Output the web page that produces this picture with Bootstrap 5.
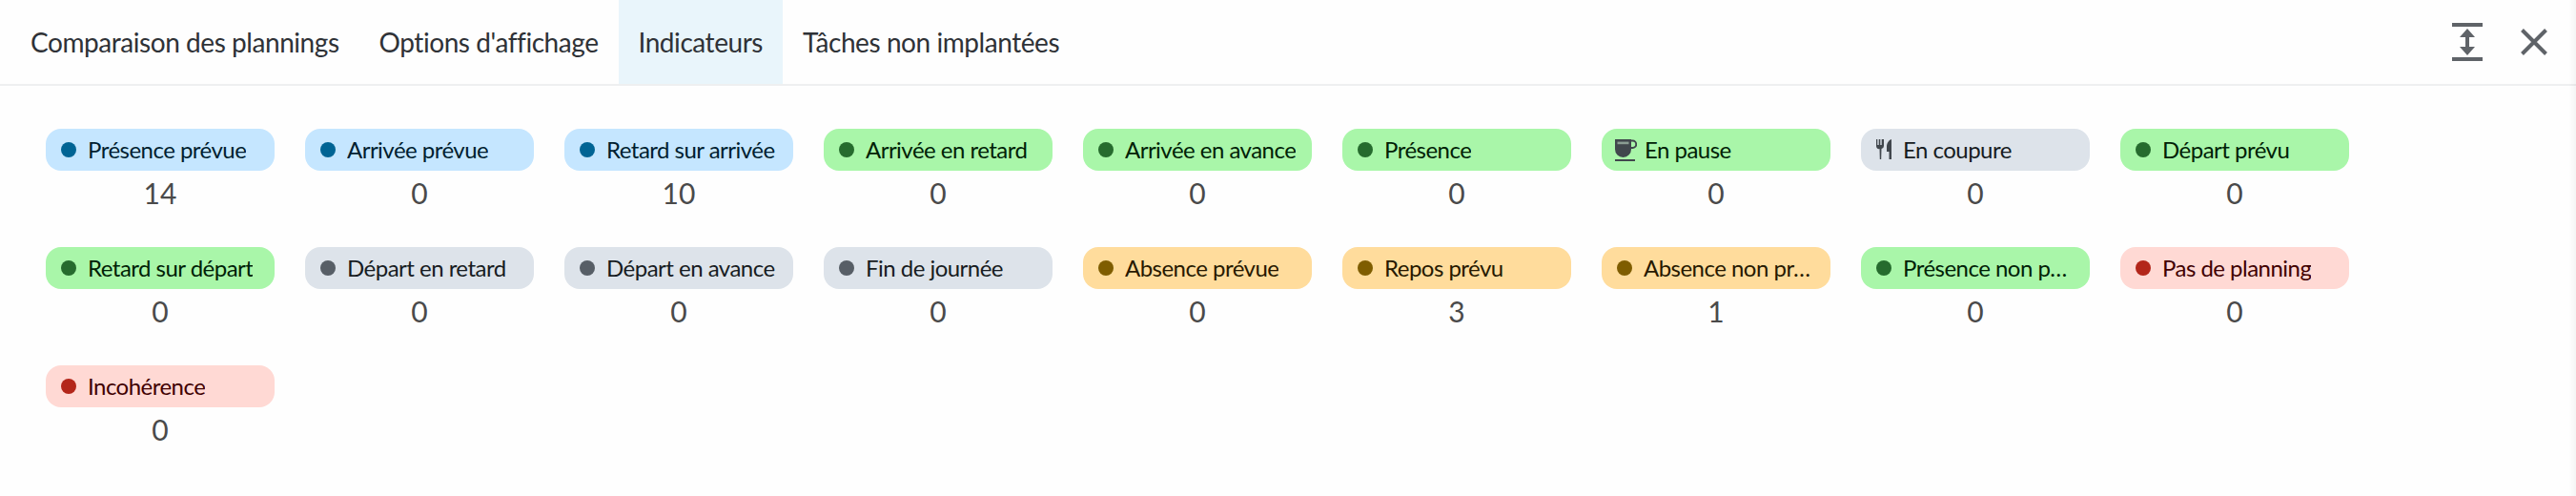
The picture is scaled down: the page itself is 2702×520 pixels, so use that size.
<!DOCTYPE html>
<html lang="fr"><head><meta charset="utf-8"><title>Indicateurs</title>
<link href="https://cdn.jsdelivr.net/npm/bootstrap@5.3.0/dist/css/bootstrap.min.css" rel="stylesheet">
<style>
html,body{background:#fefefe;font-family:Lato,"Open Sans",sans-serif;overflow:hidden;}
body::after{content:"";position:fixed;top:0;right:0;bottom:0;width:7px;background:linear-gradient(to right,rgba(0,0,0,0),rgba(0,0,0,.04));pointer-events:none;}
.top-bar{height:90px;border-bottom:2px solid #eeeff0;padding-left:11px;padding-right:30px;}
.tab-item{height:88px;padding:0 21px;font-size:28px;letter-spacing:-.44px;color:#2f3237;text-decoration:none;display:flex;align-items:center;white-space:nowrap;}
.tab-item.is-on{background:#e9f5fb;}
.tool-box{gap:40px;}
.tool-ico{display:block;background:none;border:0;padding:0;line-height:0;}
.indic-wrap{padding:45px 48px 0;column-gap:32px;row-gap:34px;}
.indic{width:240px;}
.pill{height:44px;border-radius:16px;padding:0 16px;font-size:24px;letter-spacing:-.52px;gap:12px;}
.pill .lbl{min-width:0;}
.dot{width:16px;height:16px;border-radius:50%;flex:none;}
.val{height:46px;line-height:46px;font-size:30px;color:#4a4a4a;text-align:center;}
.c-blue{background:#c5e6ff;color:#001e30;}.c-blue .dot{background:#006494;}
.c-green{background:#a9f6a9;color:#002106;}.c-green .dot{background:#266b2e;}
.c-grey{background:#dde3ea;color:#171c22;}.c-grey .dot{background:#575e66;}
.c-orange{background:#ffdc9c;color:#271900;}.c-orange .dot{background:#7f5d00;}
.c-red{background:#ffd9d4;color:#410001;}.c-red .dot{background:#b3261a;}
.ico-fill{flex:none;fill:#41474d;}
.pill-pause{padding-left:13px;gap:8px;}
</style></head><body>
<nav class="top-bar d-flex align-items-center justify-content-between">
 <div class="d-flex">
  <a class="tab-item" href="#">Comparaison des plannings</a>
  <a class="tab-item" href="#">Options d'affichage</a>
  <a class="tab-item is-on" href="#">Indicateurs</a>
  <a class="tab-item" href="#">Tâches non implantées</a>
 </div>
 <div class="d-flex align-items-center tool-box">
  <button class="tool-ico" aria-label="Agrandir"><svg width="32" height="40" viewBox="0 0 32 40"><path fill="#5f6368" d="M0 0h32v4H0zM0 36h32v4H0zM16 6l8 9h-6v10h6l-8 9-8-9h6V15H8z"/></svg></button>
  <button class="tool-ico" aria-label="Fermer"><svg width="28" height="28" viewBox="0 0 28 28"><path fill="none" stroke="#5f6368" stroke-width="4" d="M1.500 1.500l25 25M26.500 1.500l-25 25"/></svg></button>
 </div>
</nav>
<div class="indic-wrap d-flex flex-wrap" id="w">
<div class="indic"><div class="pill c-blue d-flex align-items-center"><span class="dot"></span><span class="lbl text-truncate">Présence prévue</span></div><div class="val">14</div></div>
<div class="indic"><div class="pill c-blue d-flex align-items-center"><span class="dot"></span><span class="lbl text-truncate">Arrivée prévue</span></div><div class="val">0</div></div>
<div class="indic"><div class="pill c-blue d-flex align-items-center"><span class="dot"></span><span class="lbl text-truncate">Retard sur arrivée</span></div><div class="val">10</div></div>
<div class="indic"><div class="pill c-green d-flex align-items-center"><span class="dot"></span><span class="lbl text-truncate">Arrivée en retard</span></div><div class="val">0</div></div>
<div class="indic"><div class="pill c-green d-flex align-items-center"><span class="dot"></span><span class="lbl text-truncate">Arrivée en avance</span></div><div class="val">0</div></div>
<div class="indic"><div class="pill c-green d-flex align-items-center"><span class="dot"></span><span class="lbl text-truncate">Présence</span></div><div class="val">0</div></div>
<div class="indic"><div class="pill c-green pill-pause d-flex align-items-center"><svg class="ico-fill" width="24" height="24" viewBox="0 0 24 24"><path d="M1 1h17v.6h1.500a4.700 4.700 0 0 1 0 9.400H18a8.500 8.500 0 0 1-8.500 9A8.500 8.500 0 0 1 1 11.500zM18 3.500V9h1.500a2.750 2.750 0 0 0 0-5.500zM1 22h21v2H1z"/><rect x="3.500" y="3.600" width="12" height="2.600" fill="#8a9c92"/></svg><span class="lbl text-truncate">En pause</span></div><div class="val">0</div></div>
<div class="indic"><div class="pill c-grey d-flex align-items-center"><svg class="ico-fill" width="16" height="22" viewBox="0 0 16 22"><path d="M0 0h1.300v6h1.400V0h1.600v6h1.400V0H8v7a3.200 3.200 0 0 1-2.500 3.100L5.200 21H3.800L3.500 10.100A3.200 3.200 0 0 1 0 7zM11 8c0-4 2-7 5-8v21h-2.500v-8H11z"/></svg><span class="lbl text-truncate">En coupure</span></div><div class="val">0</div></div>
<div class="indic"><div class="pill c-green d-flex align-items-center"><span class="dot"></span><span class="lbl text-truncate">Départ prévu</span></div><div class="val">0</div></div>
<div class="indic"><div class="pill c-green d-flex align-items-center"><span class="dot"></span><span class="lbl text-truncate">Retard sur départ</span></div><div class="val">0</div></div>
<div class="indic"><div class="pill c-grey d-flex align-items-center"><span class="dot"></span><span class="lbl text-truncate">Départ en retard</span></div><div class="val">0</div></div>
<div class="indic"><div class="pill c-grey d-flex align-items-center"><span class="dot"></span><span class="lbl text-truncate">Départ en avance</span></div><div class="val">0</div></div>
<div class="indic"><div class="pill c-grey d-flex align-items-center"><span class="dot"></span><span class="lbl text-truncate">Fin de journée</span></div><div class="val">0</div></div>
<div class="indic"><div class="pill c-orange d-flex align-items-center"><span class="dot"></span><span class="lbl text-truncate">Absence prévue</span></div><div class="val">0</div></div>
<div class="indic"><div class="pill c-orange d-flex align-items-center"><span class="dot"></span><span class="lbl text-truncate">Repos prévu</span></div><div class="val">3</div></div>
<div class="indic"><div class="pill c-orange d-flex align-items-center"><span class="dot"></span><span class="lbl text-truncate">Absence non prévue</span></div><div class="val">1</div></div>
<div class="indic"><div class="pill c-green d-flex align-items-center"><span class="dot"></span><span class="lbl text-truncate">Présence non prévue</span></div><div class="val">0</div></div>
<div class="indic"><div class="pill c-red d-flex align-items-center"><span class="dot"></span><span class="lbl text-truncate">Pas de planning</span></div><div class="val">0</div></div>
<div class="indic"><div class="pill c-red d-flex align-items-center"><span class="dot"></span><span class="lbl text-truncate">Incohérence</span></div><div class="val">0</div></div>
</div>
<script src="https://cdn.jsdelivr.net/npm/bootstrap@5.3.0/dist/js/bootstrap.bundle.min.js"></script>
</body></html>
